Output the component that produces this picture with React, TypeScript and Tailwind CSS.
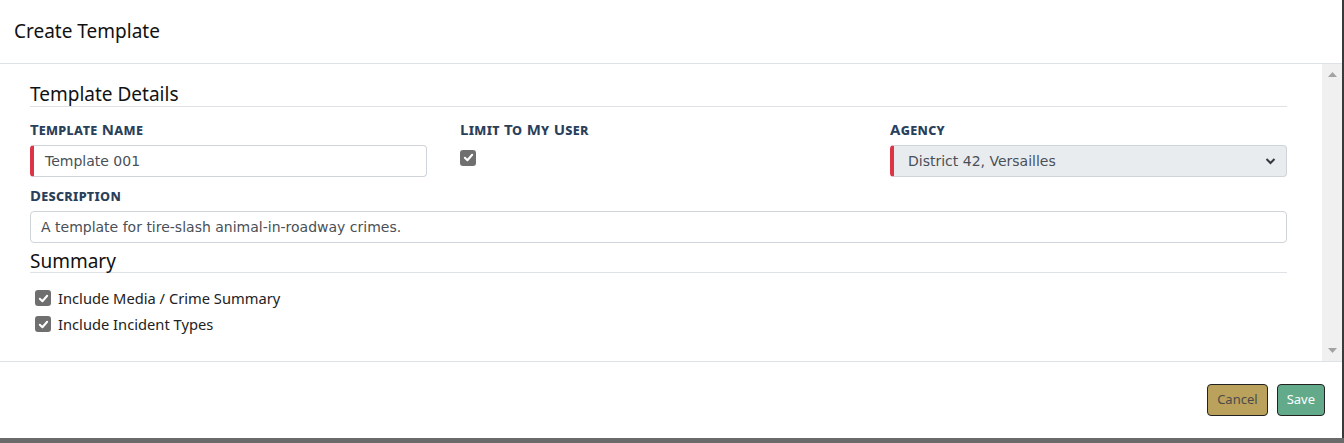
import React from "react";

const Check = ({ className = "" }: { className?: string }) => (
  <span className={"inline-flex h-4 w-4 items-center justify-center rounded-[3px] bg-[#6f6f6f] " + className}>
    <svg width="11" height="11" viewBox="0 0 12 12">
      <path d="M2 6.3 L4.8 9 L10 3" fill="none" stroke="#fff" strokeWidth="2.2" strokeLinecap="round" strokeLinejoin="round" />
    </svg>
  </span>
);

const Label = ({ children }: { children: React.ReactNode }) => (
  <div className="h-[20px] leading-[20px] text-[15px] font-bold text-[#2a3f5a] [font-variant:small-caps] tracking-[0.3px] mb-[6px]" style={{ fontFamily: '"Noto Sans", "Open Sans", sans-serif' }}>
    {children}
  </div>
);

export default function App() {
  const ui = { fontFamily: '"Noto Sans", "Open Sans", sans-serif' };
  const inp = { fontFamily: '"DejaVu Sans", Verdana, sans-serif' };
  return (
    <div className="w-full h-[443px] bg-[#6a6a6a] overflow-hidden" style={ui}>
      <div className="w-[1342px] h-[438px] bg-white flex flex-col border-r-2 border-[#3a3a3a] box-content">
        <div className="h-[64px] border-b border-[#dee2e6] flex items-center pl-[14px] text-[19px] text-[#111]">
          Create Template
        </div>
        <div className="h-[298px] flex border-b border-[#dee2e6]">
          <div className="flex-1 pl-[30px] pr-[35px] pt-[18px]">
            <div className="h-[25px] border-b border-[#dee2e6] text-[19px] leading-[25px] text-[#111]">Template Details</div>
            <div className="grid grid-cols-3 gap-x-[33px] mt-[12px]">
              <div>
                <Label>Template Name</Label>
                <div className="h-[32px] rounded-[4px] border border-[#ced4da] border-l-[4px] border-l-[#dc3545] flex items-center pl-[11px] text-[14px] text-[#495057]" style={inp}>
                  Template 001
                </div>
              </div>
              <div>
                <Label>Limit To My User</Label>
                <Check className="mt-[1px]" />
              </div>
              <div>
                <Label>Agency</Label>
                <div className="h-[32px] rounded-[4px] border border-[#ced4da] border-l-[4px] border-l-[#dc3545] bg-[#e9ecef] flex items-center justify-between pl-[14px] pr-[10px] text-[14px] text-[#495057]" style={inp}>
                  <span>District 42, Versailles</span>
                  <svg width="11" height="8" viewBox="0 0 11 8">
                    <path d="M1.5 2 L5.5 6 L9.5 2" fill="none" stroke="#343a40" strokeWidth="2" />
                  </svg>
                </div>
              </div>
            </div>
            <div className="mt-[8px]">
              <Label>Description</Label>
              <div className="h-[32px] rounded-[4px] border border-[#ced4da] flex items-center pl-[10px] text-[14px] text-[#495057]" style={inp}>
                A template for tire-slash animal-in-roadway crimes.
              </div>
            </div>
            <div className="h-[24px] mt-[6px] border-b border-[#dee2e6] text-[19px] leading-[24px] text-[#111]">Summary</div>
            <div className="mt-[17px] pl-[5px] flex flex-col gap-[10px] text-[14.7px] text-[#222]">
              <div className="flex items-center gap-[7px] h-[16px]"><Check />Include Media / Crime Summary</div>
              <div className="flex items-center gap-[7px] h-[16px]"><Check />Include Incident Types</div>
            </div>
          </div>
          <div className="w-[20px] bg-[#f0f0f0] flex flex-col items-center justify-between py-[8px]">
            <svg width="9" height="5" viewBox="0 0 9 5"><path d="M0 5 L4.5 0 L9 5Z" fill="#a3a3a3" /></svg>
            <svg width="9" height="5" viewBox="0 0 9 5"><path d="M0 0 L4.5 5 L9 0Z" fill="#a3a3a3" /></svg>
          </div>
        </div>
        <div className="flex-1 flex items-center justify-end pr-[17px] gap-[9px]">
          <button className="h-[32px] px-[9px] rounded-[4px] border border-[#222] bg-[#baa25c] text-[#4a4a4a] text-[13px]">Cancel</button>
          <button className="h-[32px] px-[9px] rounded-[4px] border border-[#222] bg-[#63aa8a] text-white text-[13px]">Save</button>
        </div>
      </div>
    </div>
  );
}
